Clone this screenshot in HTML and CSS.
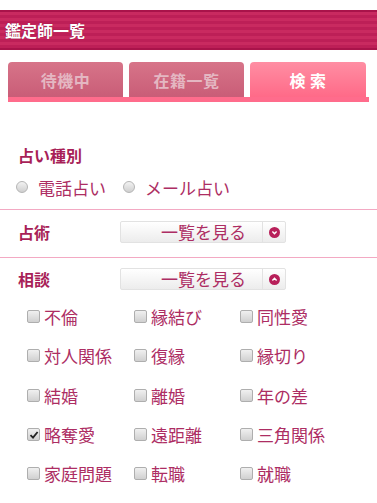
FILE: index.html
```html
<!DOCTYPE html>
<html>
<head>
    <meta charset="utf-8">
    <title>鑑定師一覧</title>
    <link rel="stylesheet" href="styles.css">
</head>
<body>
    <div class="title-bar">
        <h1>鑑定師一覧</h1>
    </div>

    <div class="tabs">
        <div class="tab">待機中</div>
        <div class="tab">在籍一覧</div>
        <div class="tab active">検 索</div>
    </div>

    <div class="search">
        <div class="group kind">
            <h2>占い種別</h2>
            <div class="radios">
                <label class="radio"><span class="dot"></span>電話占い</label>
                <label class="radio"><span class="dot"></span>メール占い</label>
            </div>
        </div>

        <div class="group row">
            <h2>占術</h2>
            <div class="list-btn">
                <span class="label">一覧を見る</span>
                <span class="toggle">
                    <svg width="11" height="11" viewBox="0 0 11 11"><circle cx="5.5" cy="5.5" r="5.5" fill="#b8205a"/><path d="M3.4 4.6 L5.5 6.7 L7.6 4.6" fill="none" stroke="#fff" stroke-width="1.4"/></svg>
                </span>
            </div>
        </div>

        <div class="group row last">
            <h2>相談</h2>
            <div class="list-btn">
                <span class="label">一覧を見る</span>
                <span class="toggle">
                    <svg width="11" height="11" viewBox="0 0 11 11"><circle cx="5.5" cy="5.5" r="5.5" fill="#b8205a"/><path d="M3.4 6.4 L5.5 4.3 L7.6 6.4" fill="none" stroke="#fff" stroke-width="1.4"/></svg>
                </span>
            </div>
        </div>

        <div class="checks">
            <label class="check"><span class="box"></span>不倫</label>
            <label class="check"><span class="box"></span>縁結び</label>
            <label class="check"><span class="box"></span>同性愛</label>
            <label class="check"><span class="box"></span>対人関係</label>
            <label class="check"><span class="box"></span>復縁</label>
            <label class="check"><span class="box"></span>縁切り</label>
            <label class="check"><span class="box"></span>結婚</label>
            <label class="check"><span class="box"></span>離婚</label>
            <label class="check"><span class="box"></span>年の差</label>
            <label class="check"><span class="box checked"><svg width="10" height="10" viewBox="0 0 10 10"><path d="M1.5 5.2 L4 7.6 L8.6 2" fill="none" stroke="#222" stroke-width="1.8"/></svg></span>略奪愛</label>
            <label class="check"><span class="box"></span>遠距離</label>
            <label class="check"><span class="box"></span>三角関係</label>
            <label class="check"><span class="box"></span>家庭問題</label>
            <label class="check"><span class="box"></span>転職</label>
            <label class="check"><span class="box"></span>就職</label>
        </div>
    </div>
</body>
</html>
```

FILE: styles.css
```css
body {
    margin: 0;
    padding: 0;
    background-color: #fff;
    font-family: "Noto Sans CJK JP", "Noto Sans", sans-serif;
    color: #ad2d63;
}

.title-bar {
    margin-top: 10px;
    height: 36px;
    border-top: 2px solid #a9134a;
    border-bottom: 2px solid #a9134a;
    background: repeating-linear-gradient(to bottom, #c92a60 0, #c92a60 3px, #bd1f57 3px, #bd1f57 6px);
    display: flex;
    align-items: center;
}

.title-bar h1 {
    margin: 0 0 0 5px;
    font-size: 16px;
    font-weight: bold;
    color: #fff;
    text-shadow: 0 0 1px #7a0d33;
    line-height: 20px;
}

.tabs {
    margin: 12px 8px 0 8px;
    display: flex;
    gap: 6px;
    border-bottom: 5px solid #ff6c8c;
}

.tab {
    width: 115px;
    height: 35px;
    border-radius: 4px 4px 0 0;
    background: linear-gradient(to bottom, #d77489, #c95d77);
    color: #e4b7c2;
    font-size: 16px;
    font-weight: bold;
    display: flex;
    align-items: center;
    justify-content: center;
    letter-spacing: 0.5px;
}

.tab.active {
    width: 116px;
    background: linear-gradient(to bottom, #ff8ea3, #ff6a88);
    color: #fff;
}

.group {
    border-bottom: 1px solid #f3a9c3;
    padding: 0 18px;
}

.group h2 {
    margin: 0;
    font-size: 16px;
    font-weight: bold;
    color: #a81f58;
    line-height: 20px;
}

.kind {
    padding-top: 43px;
    padding-bottom: 10px;
}

.radios {
    margin-top: 10px;
    height: 24px;
    display: flex;
    align-items: center;
    gap: 19px;
}

.radio {
    display: flex;
    align-items: center;
    font-size: 17px;
}

.dot {
    width: 10px;
    height: 10px;
    border: 1px solid #b5b5b5;
    border-radius: 50%;
    background: linear-gradient(to bottom, #f2f2f2, #cfcfcf);
    margin: 0 10px 0 -2px;
}

.row {
    display: flex;
    align-items: center;
    padding-top: 11px;
    padding-bottom: 14px;
}

.row h2 {
    width: 102px;
}

.row.last {
    border-bottom: none;
    padding-top: 10px;
    padding-bottom: 7px;
}

.list-btn {
    width: 164px;
    height: 20px;
    border: 1px solid #e2e2e2;
    border-radius: 2px;
    background: linear-gradient(to bottom, #ffffff, #ececec);
    display: flex;
    align-items: center;
    font-size: 17px;
    color: #ad2d63;
}

.list-btn .label {
    flex: 1;
    text-align: center;
    padding-left: 24px;
    line-height: 20px;
}

.list-btn .toggle {
    width: 22px;
    height: 20px;
    border-left: 1px solid #e2e2e2;
    display: flex;
    align-items: center;
    justify-content: center;
}

.checks {
    display: grid;
    grid-template-columns: 107px 106px 106px;
    grid-auto-rows: 39.3px;
    padding-left: 27px;
}

.check {
    display: flex;
    align-items: center;
    font-size: 17px;
}

.box {
    width: 11px;
    height: 11px;
    border: 1px solid #aeaeae;
    border-radius: 2px;
    background: linear-gradient(to bottom, #f0f0f0, #d0d0d0);
    margin-right: 4px;
    display: flex;
    align-items: center;
    justify-content: center;
}
```
